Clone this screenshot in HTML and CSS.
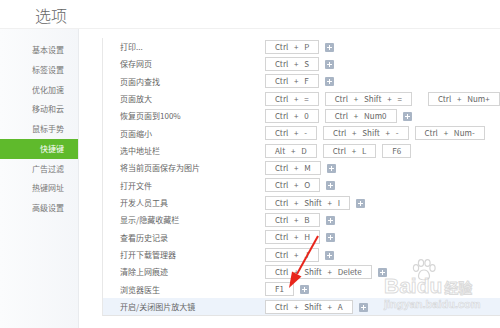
FILE: index.html
```html
<!DOCTYPE html>
<html lang="zh-CN">
<head>
  <meta charset="UTF-8">
  <title>选项</title>
  <link rel="stylesheet" href="styles.css">
</head>
<body>

  <div class="header">
    <h1>选项</h1>
  </div>

  <div class="main">
    <ul class="sidebar">
      <li>基本设置</li>
      <li>标签设置</li>
      <li>优化加速</li>
      <li>移动和云</li>
      <li>鼠标手势</li>
      <li class="active">快捷键</li>
      <li>广告过滤</li>
      <li>热键网址</li>
      <li>高级设置</li>
    </ul>

    <div class="panel">
      <div class="row"><span class="label">打印...</span><span class="key">Ctrl + P</span><span class="add"></span></div>
      <div class="row"><span class="label">保存网页</span><span class="key">Ctrl + S</span><span class="add"></span></div>
      <div class="row"><span class="label">页面内查找</span><span class="key">Ctrl + F</span><span class="add"></span></div>
      <div class="row"><span class="label">页面放大</span><span class="key">Ctrl + =</span><span class="key">Ctrl + Shift + =</span><span class="key wide">Ctrl + Num+</span></div>
      <div class="row"><span class="label">恢复页面到100%</span><span class="key">Ctrl + 0</span><span class="key">Ctrl + Num0</span><span class="add"></span></div>
      <div class="row"><span class="label">页面缩小</span><span class="key">Ctrl + -</span><span class="key">Ctrl + Shift + -</span><span class="key">Ctrl + Num-</span></div>
      <div class="row"><span class="label">选中地址栏</span><span class="key">Alt + D</span><span class="key">Ctrl + L</span><span class="key">F6</span></div>
      <div class="row"><span class="label">将当前页面保存为图片</span><span class="key">Ctrl + M</span><span class="add"></span></div>
      <div class="row"><span class="label">打开文件</span><span class="key">Ctrl + O</span><span class="add"></span></div>
      <div class="row"><span class="label">开发人员工具</span><span class="key">Ctrl + Shift + I</span><span class="add"></span></div>
      <div class="row"><span class="label">显示/隐藏收藏栏</span><span class="key">Ctrl + B</span><span class="add"></span></div>
      <div class="row"><span class="label">查看历史记录</span><span class="key">Ctrl + H</span><span class="add"></span></div>
      <div class="row"><span class="label">打开下载管理器</span><span class="key">Ctrl + J</span><span class="add"></span></div>
      <div class="row"><span class="label">清除上网痕迹</span><span class="key">Ctrl + Shift + Delete</span><span class="add"></span></div>
      <div class="row"><span class="label">浏览器医生</span><span class="key">F1</span><span class="add"></span></div>
      <div class="row current"><span class="label">开启/关闭图片放大镜</span><span class="key">Ctrl + Shift + A</span><span class="add"></span></div>
    </div>
  </div>

  <!-- watermark -->
  <div class="watermark">
    <svg class="paw" width="26" height="22" viewBox="0 0 26 22">
      <g fill="none" stroke="#d6d6d6" stroke-width="1.2">
        <ellipse cx="5" cy="9" rx="2.6" ry="3.4"/>
        <ellipse cx="10" cy="4" rx="2.6" ry="3.4"/>
        <ellipse cx="16.5" cy="4" rx="2.6" ry="3.4"/>
        <ellipse cx="21.5" cy="9" rx="2.6" ry="3.4"/>
        <path d="M13 11 C8 11 6 18 9 20 C11 21 15 21 17 20 C20 18 18 11 13 11 Z"/>
      </g>
    </svg>
    <div class="wm-brand">Baidu<span>经验</span></div>
    <div class="wm-url">jingyan.baidu.com</div>
  </div>

  <!-- red arrow -->
  <svg class="arrow" width="500" height="328" viewBox="0 0 500 328">
    <line x1="318" y1="236" x2="297" y2="274" stroke="#e8261c" stroke-width="2"/>
    <polygon points="289,288 301.5,276.5 292,271.5" fill="#e8261c"/>
  </svg>

</body>
</html>
```

FILE: styles.css
```css
body {
  margin: 0;
  width: 500px;
  height: 328px;
  overflow: hidden;
  position: relative;
  background: #fff;
  font-family: "Noto Sans CJK SC", "Noto Sans", sans-serif;
  color: #555;
}
.header {
  height: 28px;
  border-bottom: 1px solid #f0f0f0;
}
.header h1 {
  margin: 0;
  padding-left: 35px;
  font-size: 16px;
  font-weight: 300;
  line-height: 30px;
  color: #666;
}
.main {
  display: flex;
  height: 299px;
}
.sidebar {
  list-style: none;
  flex-shrink: 0;
  margin: 0;
  padding: 11px 0 0;
  width: 78px;
  border-right: 1px solid #e9ebee;
  background: linear-gradient(to right, #fbfcfd, #f4f6f9);
}
.sidebar li {
  height: 19.75px;
  line-height: 19.75px;
  padding-right: 14px;
  text-align: right;
  font-size: 8px;
  color: #777;
}
.sidebar li.active {
  background-color: #5fba2c;
  color: #fff;
}
.panel {
  flex: 1;
  min-width: 0;
  margin: 9px 0 12px 23px;
  border-left: 1px solid #e8e8e8;
  border-bottom: 1px solid #e4e4e4;
}
.row {
  display: flex;
  align-items: center;
  height: 17.33px;
  padding-left: 17px;
  font-size: 8px;
  white-space: nowrap;
}
.row.current {
  background-color: #edf3fb;
}
.label {
  width: 145px;
  flex-shrink: 0;
  color: #666;
}
.key {
  box-sizing: border-box;
  flex-shrink: 0;
  height: 14px;
  line-height: 12px;
  padding: 0 9px;
  margin-right: 6px;
  border: 1px solid #d4d4d4;
  background: #fff;
  color: #666;
  word-spacing: 4px;
  white-space: pre;
}
.key.wide {
  margin-left: 10px;
}
.add {
  position: relative;
  flex-shrink: 0;
  width: 9px;
  height: 9px;
  margin-top: 1px;
  border-radius: 1px;
  background-color: #a9b5c5;
}
.add::before,
.add::after {
  content: "";
  position: absolute;
  background: #fff;
}
.add::before {
  left: 2px;
  top: 4px;
  width: 5px;
  height: 1px;
}
.add::after {
  left: 4px;
  top: 2px;
  width: 1px;
  height: 5px;
}
.watermark {
  position: absolute;
  left: 384px;
  top: 259px;
  width: 90px;
  color: rgba(205, 205, 205, 0.55);
}
.paw {
  display: block;
  margin-left: 27px;
}
.wm-brand {
  margin-top: -6px;
  font-family: "Liberation Sans", sans-serif;
  font-size: 21px;
  font-weight: bold;
  line-height: 22px;
  color: rgba(255, 255, 255, 0.4);
  -webkit-text-stroke: 1px rgba(195, 195, 195, 0.6);
}
.wm-brand span {
  font-family: "Noto Sans CJK SC", sans-serif;
  font-size: 14px;
  margin-left: 2px;
}
.wm-url {
  font-family: "Liberation Sans", sans-serif;
  font-size: 11px;
  font-weight: bold;
  line-height: 12px;
  color: rgba(255, 255, 255, 0.4);
  -webkit-text-stroke: 0.6px rgba(195, 195, 195, 0.6);
}
.arrow {
  position: absolute;
  left: 0;
  top: 0;
  pointer-events: none;
}
```
